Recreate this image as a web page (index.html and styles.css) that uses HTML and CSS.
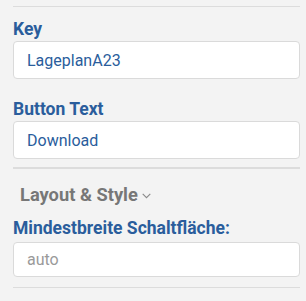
FILE: index.html
```html
<!DOCTYPE html>
<html lang="de">
<head>
    <meta charset="UTF-8">
    <meta name="viewport" content="width=device-width, initial-scale=1.0">
    <title>Button Einstellungen</title>
    <link rel="stylesheet" href="styles.css">
</head>
<body>
    <div class="settings-panel">
        <hr class="rule">
        <div class="form-group">
            <label for="key">Key</label>
            <input type="text" id="key" name="key" value="LageplanA23">
        </div>
        <div class="form-group">
            <label for="buttonText">Button Text</label>
            <input type="text" id="buttonText" name="buttonText" value="Download">
        </div>
        <hr class="rule thick">
        <div class="section-toggle">
            <span>Layout &amp; Style</span>
            <svg class="chevron" width="9" height="6" viewBox="0 0 9 6">
                <path d="M0.7 0.8 L4.5 4.6 L8.3 0.8" fill="none" stroke="#8a8a8a" stroke-width="1.1"/>
            </svg>
        </div>
        <div class="form-group small">
            <label for="minWidth">Mindestbreite Schaltfläche:</label>
            <input type="text" id="minWidth" name="minWidth" placeholder="auto">
        </div>
        <hr class="rule">
    </div>
</body>
</html>
```

FILE: styles.css
```css
body {
    font-family: Roboto, "Liberation Sans", sans-serif;
    margin: 0;
    padding: 0;
    background-color: #f3f3f3;
}
.settings-panel {
    padding: 6px 6px 0 13px;
}
.rule {
    border: none;
    border-top: 1px solid #dcdcdc;
    margin: 0;
}
.rule.thick {
    border-top-width: 2px;
    margin-top: 8px;
}
.form-group {
    margin-top: 12px;
}
.form-group + .form-group {
    margin-top: 20px;
}
.form-group label {
    display: block;
    margin-bottom: 2px;
    font-size: 17.5px;
    line-height: 20px;
    font-weight: bold;
    color: #2a5d9c;
}
.form-group input {
    display: block;
    box-sizing: border-box;
    width: 100%;
    height: 38px;
    padding: 0 13px;
    border: 1px solid #dadada;
    border-radius: 4px;
    background: #fff;
    font-family: inherit;
    font-size: 16px;
    color: #2a5d9c;
    outline: none;
}
.form-group.small label {
    margin-bottom: 4px;
}
.form-group.small input {
    height: 35px;
}
.form-group input::placeholder {
    color: #9a9a9a;
}
.form-group.small + .rule {
    margin-top: 10px;
}
.section-toggle {
    display: flex;
    align-items: center;
    gap: 4px;
    margin-top: 15px;
    padding-left: 7px;
    font-size: 18.3px;
    line-height: 21px;
    font-weight: bold;
    color: #777;
}
.section-toggle + .form-group {
    margin-top: 13px;
}
.chevron {
    margin-top: 2px;
}
```
